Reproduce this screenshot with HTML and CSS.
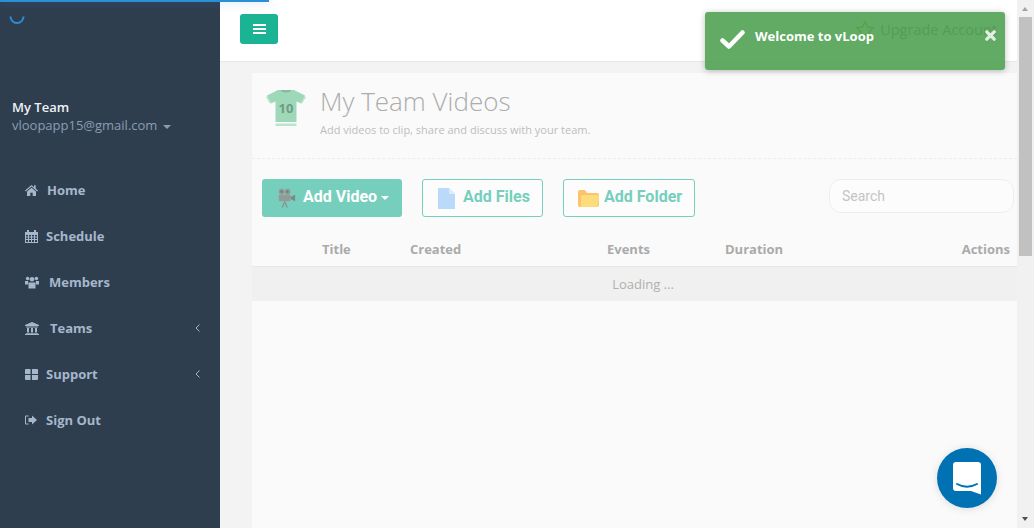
FILE: index.html
```html
<!DOCTYPE html>
<html lang="en">
<head>
    <meta charset="UTF-8">
    <meta name="viewport" content="width=device-width, initial-scale=1.0">
    <title>My Team Videos</title>
    <link rel="stylesheet" href="styles.css">
</head>
<body>

    <div class="pace-bar"></div>

    <div class="app">
        <aside class="sidebar">
            <svg class="spinner" width="16" height="10" viewBox="0 0 16 10"><path d="M1.5 1.5a6.5 6.5 0 0 0 13 0" fill="none" stroke="#2b8fd6" stroke-width="2"/></svg>
            <div class="profile">
                <div class="profile-name">My Team</div>
                <div class="profile-mail">vloopapp15@gmail.com <span class="caret"></span></div>
            </div>
            <ul class="nav">
                <li>
                    <svg class="nav-icon" width="13" height="12" viewBox="0 0 13 12"><path d="M6.5 1 0 6.6l.7.8L6.5 2.5l5.800 4.900.7-.8-2.300-2V1.200H9v2.100zM2 7.600V12h3.300V8.700h2.400V12H11V7.600L6.500 3.700z"/></svg>
                    <span class="gap-a">Home</span>
                </li>
                <li>
                    <svg class="nav-icon" width="13" height="13" viewBox="0 0 13 13"><path fill-rule="evenodd" d="M2 0h2v2h5V0h2v2h2v11H0V2h2zM1 5v1.500h2V5zm3 0v1.500h2V5zm3 0v1.500h2V5zm3 0v1.500h2V5zM1 7.500V9h2V7.500zm3 0V9h2V7.500zm3 0V9h2V7.500zm3 0V9h2V7.500zM1 10v2h2v-2zm3 0v2h2v-2zm3 0v2h2v-2zm3 0v2h2v-2z"/></svg>
                    <span class="gap-s">Schedule</span>
                </li>
                <li>
                    <svg class="nav-icon" width="14" height="13" viewBox="0 0 14 12"><circle cx="2.600" cy="2" r="1.800"/><circle cx="11.400" cy="2" r="1.800"/><circle cx="7" cy="2.800" r="2.300"/><path d="M0 4.500h3.200L3 8H0zM14 4.500h-3.200L11 8h3zM3.500 6h7v6h-7z"/></svg>
                    <span class="gap-b">Members</span>
                </li>
                <li>
                    <svg class="nav-icon" width="14" height="13" viewBox="0 0 14 13"><path fill-rule="evenodd" d="M7 0l7 3v1H0V3zM1 4.500h12v1H1zM2 6h2v4.500H2zM6 6h2v4.500H6zM10 6h2v4.500h-2zM1 11h12v.8H1zM0 12h14v1H0z"/></svg>
                    <span class="gap-c">Teams</span>
                    <svg class="chev" width="5" height="8" viewBox="0 0 5 8"><path d="M4.500.500 1 4l3.500 3.500" fill="none" stroke="#a6b7cc"/></svg>
                </li>
                <li>
                    <svg class="nav-icon" width="13" height="11" viewBox="0 0 13 11"><path d="M0 1a1 1 0 0 1 1-1h4.500v5H0zM7 0h5a1 1 0 0 1 1 1v4H7zM0 6h5.500v5H1a1 1 0 0 1-1-1zM7 6h6v4a1 1 0 0 1-1 1H7z"/></svg>
                    <span class="gap-s">Support</span>
                    <svg class="chev" width="5" height="8" viewBox="0 0 5 8"><path d="M4.500.500 1 4l3.500 3.500" fill="none" stroke="#a6b7cc"/></svg>
                </li>
                <li>
                    <svg class="nav-icon" width="12" height="10" viewBox="0 0 12 9"><path d="M3.500 0H1a1 1 0 0 0-1 1v7a1 1 0 0 0 1 1h2.500V8H1V1h2.500zM7 0l5 4.500L7 9V6.500H3.500v-4H7z"/></svg>
                    <span class="gap-a">Sign Out</span>
                </li>
            </ul>
        </aside>

        <div class="page">
            <header class="topbar">
                <button class="menu-btn">
                    <span></span><span></span><span></span>
                </button>
                <div class="upgrade">
                    <svg width="20" height="19" viewBox="0 0 20 19"><path d="M10 1.500l2.500 5.500 6 .6-4.500 4 1.300 5.900L10 14.500l-5.300 3 1.300-5.900-4.500-4 6-.6z" fill="none" stroke="#8f9a2a" stroke-width="1.500"/></svg>
                    Upgrade Account
                </div>
            </header>

            <main class="content">
                <section class="panel">
                    <div class="title-row">
                        <svg class="shirt" width="42" height="38" viewBox="0 0 42 38">
                            <path d="M13 1h16l11 5.500-3.500 8-5-2V33H10.500V12.500l-5 2-3.500-8z" fill="#9ed8b9"/>
                            <path d="M16 1h10a5 2.500 0 0 1-10 0z" fill="#86bc9e"/>
                            <path d="M10.500 34.500H31.500v2.500H10.500zM1 8l4 6.500 1.300-.6-3.800-7zM41 8l-4 6.500-1.300-.6 3.800-7z" fill="#b9e5cd"/>
                            <text x="21" y="24" class="shirt-num">10</text>
                        </svg>
                        <div class="title-text">
                            <h1>My Team Videos</h1>
                            <p>Add videos to clip, share and discuss with your team.</p>
                        </div>
                    </div>

                    <div class="toolbar">
                        <button class="btn btn-solid">
                            <svg width="18" height="20" viewBox="0 0 20 21"><circle cx="4" cy="3.500" r="3.300" fill="#929b98"/><circle cx="10.500" cy="3.500" r="3.300" fill="#929b98"/><circle cx="4" cy="3.500" r="1.200" fill="#6b7a76"/><circle cx="10.500" cy="3.500" r="1.200" fill="#6b7a76"/><path d="M1 7h13v7H1z" fill="#929b98"/><path d="M14 9.500l5-2.500v7l-5-2.500z" fill="#7d8885"/><path d="M7 14 4 21h1.500L7.500 16l2 5H11l-3-7z" fill="#86908d"/></svg>
                            <span class="btn-label">Add Video</span>
                            <span class="btn-caret"></span>
                        </button>
                        <button class="btn btn-line btn-files">
                            <svg width="17" height="21" viewBox="0 0 17 21"><path d="M0 0h11l6 6v15H0z" fill="#bbdafa"/><path d="M11 0l6 6h-6z" fill="#dcecfc"/></svg>
                            <span class="btn-label">Add Files</span>
                        </button>
                        <button class="btn btn-line btn-folder">
                            <svg width="21" height="17" viewBox="0 0 21 17"><path d="M0 2a2 2 0 0 1 2-2h5l2 3h10a2 2 0 0 1 2 2v10a2 2 0 0 1-2 2H2a2 2 0 0 1-2-2z" fill="#fdc36b"/><path d="M3 7a2 2 0 0 1 2-2h14a2 2 0 0 1 2 2l-1 8a2 2 0 0 1-2 2H2a2 2 0 0 0 1-2z" fill="#fddc7c"/></svg>
                            <span class="btn-label">Add Folder</span>
                        </button>
                        <input class="search" type="text" placeholder="Search">
                    </div>

                    <table class="videos">
                        <thead>
                            <tr>
                                <th class="col-thumb"></th>
                                <th class="col-title">Title</th>
                                <th class="col-created">Created</th>
                                <th class="col-events">Events</th>
                                <th class="col-duration">Duration</th>
                                <th class="col-actions">Actions</th>
                            </tr>
                        </thead>
                        <tbody>
                            <tr>
                                <td colspan="6">Loading ...</td>
                            </tr>
                        </tbody>
                    </table>
                </section>
            </main>
        </div>

        <div class="scrollbar">
            <div class="arrow-up"></div>
            <div class="thumb"></div>
            <div class="arrow-down"></div>
        </div>
    </div>

    <div class="toast">
        <svg class="toast-check" width="25" height="19" viewBox="0 0 25 19"><path d="M2.500 10.500 9 16.500 22.500 2.500" fill="none" stroke="#fff" stroke-width="4.500" stroke-linecap="round" stroke-linejoin="round"/></svg>
        <span class="toast-text">Welcome to vLoop</span>
        <svg class="toast-close" width="11" height="11" viewBox="0 0 11 11"><path d="M1.800 1.800l7.400 7.400M9.200 1.800 1.800 9.200" stroke="#e4efe4" stroke-width="3.200" stroke-linecap="round"/></svg>
    </div>

    <div class="chat-btn">
        <svg width="28" height="33" viewBox="0 0 28 33"><path d="M3 0h22a3 3 0 0 1 3 3v29.500L18 29H3a3 3 0 0 1-3-3V3a3 3 0 0 1 3-3z" fill="#fff"/><path d="M4 22c6 3.500 14 3.500 20 0" fill="none" stroke="#0071b2" stroke-width="2" stroke-linecap="round"/></svg>
    </div>

</body>
</html>
```

FILE: styles.css
```css
* {
    box-sizing: border-box;
    margin: 0;
    padding: 0;
}
html, body {
    height: 528px;
    overflow: hidden;
}
body {
    font-family: "Open Sans", sans-serif;
    background-color: #f3f3f3;
}
.app {
    display: flex;
    height: 528px;
}

/* sidebar */
.sidebar {
    width: 220px;
    flex-shrink: 0;
    background-color: #2f3e4f;
    padding-top: 15px;
}
.spinner {
    display: block;
    margin-left: 9px;
}
.profile {
    margin-top: 73px;
    padding-left: 12px;
}
.profile-name {
    font-size: 13px;
    font-weight: 600;
    line-height: 18px;
    color: #eef2f6;
}
.profile-mail {
    font-size: 13px;
    line-height: 18px;
    color: #8a9db3;
}
.caret {
    display: inline-block;
    width: 0;
    height: 0;
    margin-left: 2px;
    vertical-align: middle;
    border-top: 4px solid #8a9db3;
    border-left: 4px solid transparent;
    border-right: 4px solid transparent;
}
.nav {
    list-style-type: none;
    margin-top: 33px;
}
.nav li {
    display: flex;
    align-items: center;
    height: 46px;
    padding: 0 20px 0 25px;
    font-size: 13px;
    font-weight: 700;
    color: #a6b7cc;
}
.nav-icon {
    fill: #a6b7cc;
    flex-shrink: 0;
}
.gap-a {
    margin-left: 9px;
}
.gap-s {
    margin-left: 8px;
}
.gap-b {
    margin-left: 10px;
}
.gap-c {
    margin-left: 11px;
}
.chev {
    margin-left: auto;
}

/* top bar */
.page {
    flex: 1;
    min-width: 0;
    display: flex;
    flex-direction: column;
}
.topbar {
    display: flex;
    align-items: flex-start;
    justify-content: space-between;
    height: 62px;
    padding: 14px 20px 0;
    background-color: #fff;
    border-bottom: 1px solid #e7e7e7;
}
.menu-btn {
    display: flex;
    flex-direction: column;
    justify-content: center;
    gap: 2px;
    align-items: center;
    width: 38px;
    height: 30px;
    border: none;
    border-radius: 3px;
    background-color: #1ab394;
}
.menu-btn span {
    display: block;
    width: 13px;
    height: 2px;
    background-color: #fff;
}
.upgrade {
    display: flex;
    align-items: center;
    gap: 5px;
    margin-top: 6px;
    font-size: 14.5px;
    color: #666;
}

/* panel */
.content {
    flex: 1;
    padding: 11px 0 0 32px;
}
.panel {
    height: 100%;
    background-color: #fafafa;
}
.title-row {
    display: flex;
    align-items: flex-start;
    gap: 13px;
    height: 86px;
    padding: 16px 0 0 13px;
    border-bottom: 1px dashed #ededed;
}
.title-text {
    margin-top: -3px;
}
.shirt {
    flex-shrink: 0;
}
.shirt-num {
    font-family: "Open Sans", sans-serif;
    font-size: 13px;
    font-weight: 700;
    fill: #6f9c84;
    text-anchor: middle;
}
.title-row h1 {
    font-size: 26px;
    font-weight: 300;
    line-height: 30px;
    color: #adadad;
}
.title-row p {
    margin-top: 6px;
    font-size: 11px;
    line-height: 15px;
    color: #bdbdbd;
}

/* buttons */
.toolbar {
    display: flex;
    align-items: flex-start;
    padding: 20px 3px 0 10px;
}
.btn {
    display: flex;
    align-items: center;
    height: 38px;
    border-radius: 3px;
    font-family: Roboto, sans-serif;
    font-size: 16px;
    font-weight: 700;
}
.btn-label {
    padding-bottom: 4px;
}
.btn-solid {
    width: 140px;
    padding-left: 16px;
    gap: 7px;
    border: none;
    background-color: #76cfbc;
    color: #fff;
}
.btn-caret {
    width: 0;
    height: 0;
    margin-left: -3px;
    border-top: 4px solid #fff;
    border-left: 4px solid transparent;
    border-right: 4px solid transparent;
}
.btn-line {
    border: 1px solid #76cfbc;
    background-color: #fcfcfc;
    color: #76cfbc;
}
.btn-files {
    width: 121px;
    margin-left: 20px;
    padding-left: 15px;
    gap: 8px;
}
.btn-folder {
    width: 132px;
    margin-left: 20px;
    padding-left: 14px;
    gap: 5px;
}
.search {
    width: 185px;
    height: 34px;
    margin-left: auto;
    padding: 0 12px;
    border: 1px solid #eee;
    border-radius: 12px;
    background-color: #fcfcfc;
    font-family: Roboto, sans-serif;
    font-size: 14px;
}
.search::placeholder {
    color: #c4c4c4;
}

/* table */
.videos {
    width: 100%;
    margin-top: 15px;
    border-collapse: collapse;
    table-layout: fixed;
}
.videos th {
    height: 34px;
    text-align: left;
    font-size: 13px;
    font-weight: 700;
    color: #aaa;
    border-bottom: 1px solid #e7e7e7;
}
.col-thumb {
    width: 70px;
}
.col-title {
    width: 88px;
}
.col-created {
    width: 197px;
}
.col-events {
    width: 118px;
}
.videos .col-actions {
    padding-right: 7px;
    text-align: right;
}
.videos td {
    height: 35px;
    padding-left: 17px;
    background-color: #f0f0f0;
    text-align: center;
    font-size: 13px;
    color: #b0b0b0;
}

/* scrollbar */
.scrollbar {
    position: relative;
    width: 17px;
    flex-shrink: 0;
    background-color: #f1f1f1;
}
.thumb {
    position: absolute;
    top: 17px;
    left: 2px;
    width: 13px;
    height: 239px;
    background-color: #c1c1c1;
}
.arrow-up,
.arrow-down {
    position: absolute;
    left: 5px;
    width: 0;
    height: 0;
    border-left: 3.5px solid transparent;
    border-right: 3.5px solid transparent;
}
.arrow-up {
    top: 7px;
    border-bottom: 4px solid #a3a3a3;
}
.arrow-down {
    bottom: 7px;
    border-top: 4px solid #505050;
}

/* over the page */
.pace-bar {
    position: absolute;
    top: 0;
    left: 0;
    width: 269px;
    height: 2px;
    background-color: #2b8fd6;
    box-shadow: 0 0 10px rgba(43, 143, 214, 0.5);
    z-index: 5;
}
.toast {
    position: absolute;
    top: 12px;
    left: 705px;
    width: 300px;
    height: 58px;
    background-color: rgba(80, 162, 83, 0.9);
    border-radius: 3px;
    box-shadow: 0 1px 6px rgba(0, 0, 0, 0.25);
    z-index: 5;
}
.toast-check {
    position: absolute;
    top: 18px;
    left: 15px;
}
.toast-text {
    position: absolute;
    top: 15px;
    left: 50px;
    font-size: 13px;
    font-weight: 700;
    line-height: 18px;
    color: #fff;
}
.toast-close {
    position: absolute;
    top: 18px;
    left: 280px;
}
.chat-btn {
    position: absolute;
    top: 448px;
    left: 937px;
    display: flex;
    align-items: center;
    justify-content: center;
    width: 60px;
    height: 60px;
    border-radius: 50%;
    background-color: #0071b2;
    box-shadow: 0 1px 8px rgba(0, 0, 0, 0.12);
    z-index: 5;
}
```
